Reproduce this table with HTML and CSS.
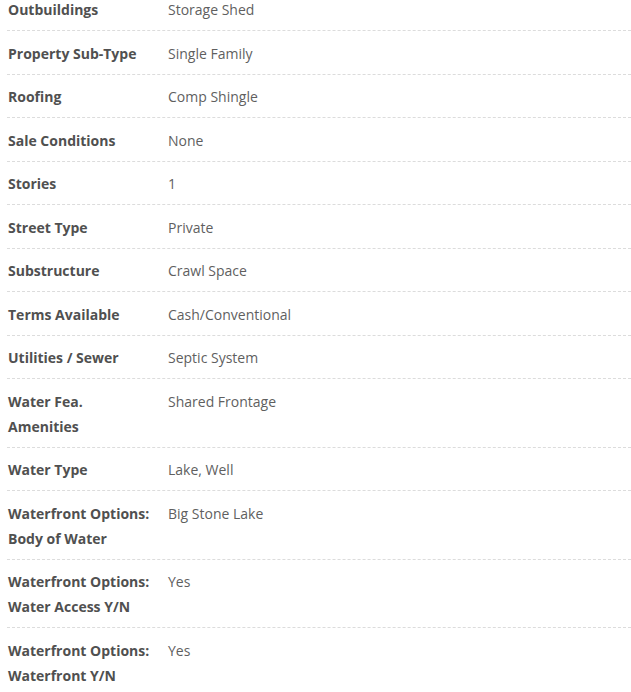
FILE: index.html
```html
<!DOCTYPE html>
<html>
<head>
<meta charset="utf-8">
<link rel="stylesheet" href="styles.css">
</head>
<body>
<div class="details">
  <div class="row"><div class="label">Outbuildings</div><div class="value">Storage Shed</div></div>
  <div class="row"><div class="label">Property Sub-Type</div><div class="value">Single Family</div></div>
  <div class="row"><div class="label">Roofing</div><div class="value">Comp Shingle</div></div>
  <div class="row"><div class="label">Sale Conditions</div><div class="value">None</div></div>
  <div class="row"><div class="label">Stories</div><div class="value">1</div></div>
  <div class="row"><div class="label">Street Type</div><div class="value">Private</div></div>
  <div class="row"><div class="label">Substructure</div><div class="value">Crawl Space</div></div>
  <div class="row"><div class="label">Terms Available</div><div class="value">Cash/Conventional</div></div>
  <div class="row"><div class="label">Utilities / Sewer</div><div class="value">Septic System</div></div>
  <div class="row"><div class="label">Water Fea.<br>Amenities</div><div class="value">Shared Frontage</div></div>
  <div class="row"><div class="label">Water Type</div><div class="value">Lake, Well</div></div>
  <div class="row"><div class="label">Waterfront Options:<br>Body of Water</div><div class="value">Big Stone Lake</div></div>
  <div class="row"><div class="label">Waterfront Options:<br>Water Access Y/N</div><div class="value">Yes</div></div>
  <div class="row"><div class="label">Waterfront Options:<br>Waterfront Y/N</div><div class="value">Yes</div></div>
</div>
</body>
</html>
```
FILE: styles.css
```css
html, body {
  margin: 0;
  padding: 0;
  background: #fff;
  overflow: hidden;
}
.details {
  margin: -12.5px 0 0 7px;
  font-family: "Open Sans", "Liberation Sans", sans-serif;
  font-size: 14px;
  line-height: 25px;
}
.row {
  display: grid;
  grid-template-columns: 161px 1fr;
  padding: 9.5px 0 8px 0;
  border-bottom: 1px dashed #dcdcdc;
}
.label {
  padding-left: 1px;
  font-weight: 700;
  color: #505050;
  white-space: nowrap;
}
.value {
  color: #5f5f5f;
}
```
